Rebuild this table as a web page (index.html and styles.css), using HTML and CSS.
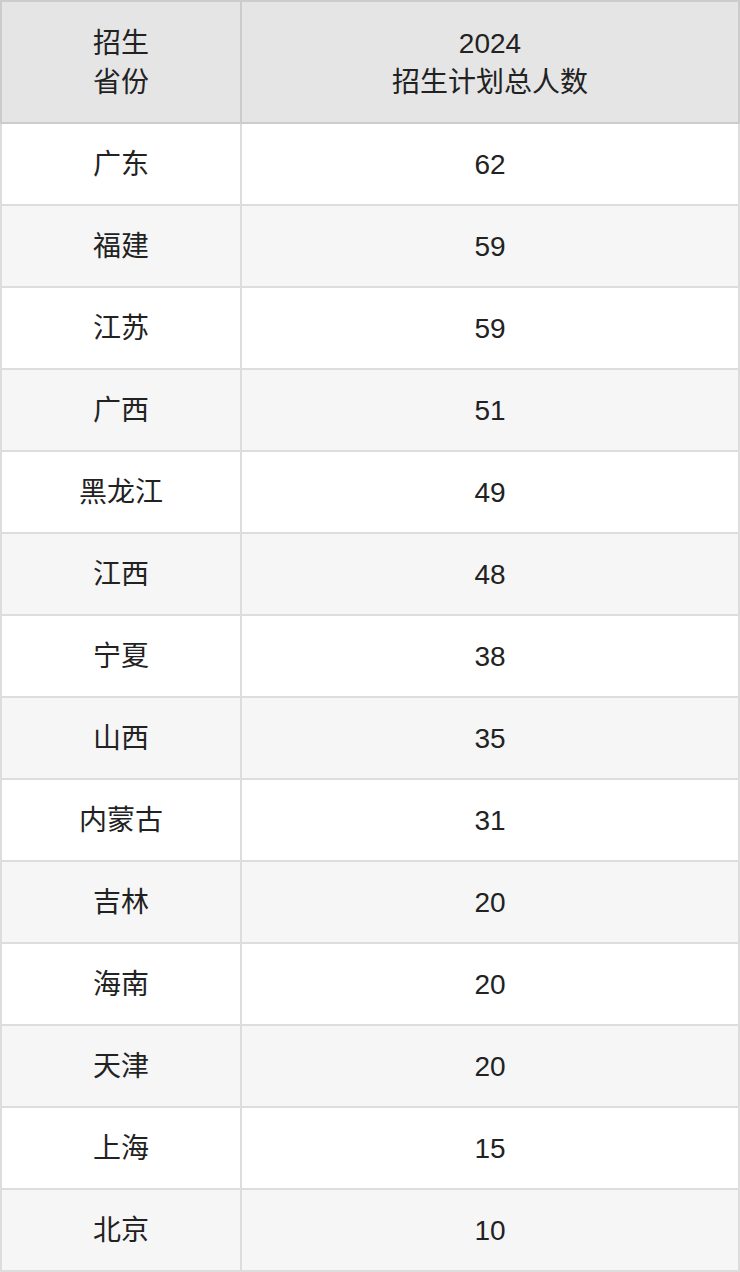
FILE: index.html
```html
<!DOCTYPE html>
<html lang="zh">
<head>
<meta charset="utf-8">
<link rel="stylesheet" href="styles.css">
</head>
<body>
<table class="plan">
<thead>
<tr><th class="c1">招生<br>省份</th><th class="c2">2024<br>招生计划总人数</th></tr>
</thead>
<tbody>
<tr><td>广东</td><td>62</td></tr>
<tr><td>福建</td><td>59</td></tr>
<tr><td>江苏</td><td>59</td></tr>
<tr><td>广西</td><td>51</td></tr>
<tr><td>黑龙江</td><td>49</td></tr>
<tr><td>江西</td><td>48</td></tr>
<tr><td>宁夏</td><td>38</td></tr>
<tr><td>山西</td><td>35</td></tr>
<tr><td>内蒙古</td><td>31</td></tr>
<tr><td>吉林</td><td>20</td></tr>
<tr><td>海南</td><td>20</td></tr>
<tr><td>天津</td><td>20</td></tr>
<tr><td>上海</td><td>15</td></tr>
<tr><td>北京</td><td>10</td></tr>
</tbody>
</table>
</body>
</html>
```
FILE: styles.css
```css
html, body {
  margin: 0;
  padding: 0;
  background: #fff;
}
.plan {
  width: 740px;
  border-collapse: collapse;
  font-family: "Liberation Sans", "Noto Sans CJK SC", sans-serif;
  font-size: 28px;
  color: #222;
  table-layout: fixed;
}
.plan th, .plan td {
  text-align: center;
  vertical-align: middle;
  padding: 2px 0 0 0;
  font-weight: normal;
  box-sizing: content-box;
}
.plan th {
  background: #e5e5e5;
  border: 2px solid #cccccc;
  height: 118px;
  line-height: 39px;
}
.plan .c1 { width: 238px; }
.plan td {
  border: 2px solid #dddddd;
  height: 78px;
  line-height: 40px;
}
.plan tbody tr:nth-child(even) td {
  background: #f6f6f6;
}
```
